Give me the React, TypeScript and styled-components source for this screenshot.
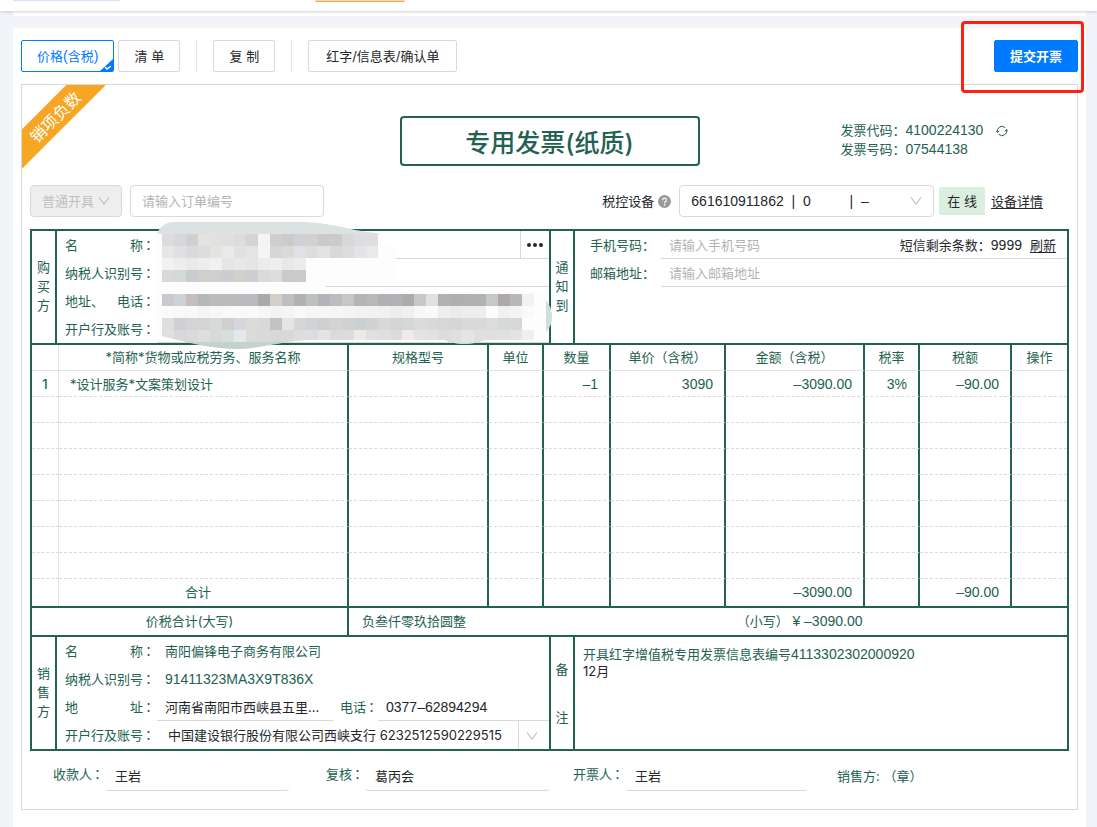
import React from "react";
import styled, { createGlobalStyle, css } from "styled-components";

const c = {
  green: "#236152",
  ink: "#24272b",
  line: "#d9d9d9",
  mute: "#b3b3b3",
  blue: "#007bff",
  page: "#f3f4f9",
};
const sans = `Inter, "Noto Sans CJK SC", sans-serif`;
const digits = css`
  font-family: "Liberation Sans", "Noto Sans CJK SC", sans-serif;
  font-size: 14px;
`;

const Global = createGlobalStyle`
  * { box-sizing: border-box; }
  body { margin: 0; background: ${c.page}; }
  body, button, input, select, textarea {
    font-family: ${sans};
    font-size: 13px;
    line-height: 19px;
    color: ${c.ink};
  }
  input::placeholder { color: ${c.mute}; opacity: 1; }
  p { margin: 0; }
`;

const Num = styled.span`
  ${digits}
`;

const Page = styled.div`
  display: flex;
  flex-direction: column;
  min-height: 100vh;
`;
const TopBar = styled.header`
  position: relative;
  display: flex;
  align-items: flex-start;
  height: 11px;
  padding-left: 13px;
  gap: 195px;
  background: #fff;
  box-shadow: 0 1px 3px rgba(0, 0, 0, 0.18);
`;
const TabEdge = styled.span`
  width: 107px;
  height: 1px;
  background: #cfe3fc;
`;
const OrangeEdge = styled.span`
  width: 90px;
  height: 2px;
  border-bottom: 1px solid #e9a857;
  border-radius: 0 0 3px 3px;
  background: #fbd9ae;
`;
const Strip = styled.div`
  height: 5px;
  margin: 0 11px 0 13px;
  background: #fff;
`;
const Card = styled.main`
  flex: 1;
  margin: 12px 11px 0 13px;
  padding: 12px 8px 17px;
  background: #fff;
`;

const Toolbar = styled.div`
  display: flex;
  align-items: center;
  margin-bottom: 12px;
`;
const Button = styled.button<{ $active?: boolean; $primary?: boolean; $min?: number }>`
  position: relative;
  height: 32px;
  min-width: ${(p) => p.$min || 62}px;
  padding: 0 15px;
  border: 1px solid ${c.line};
  border-radius: 2px;
  background: #fff;
  white-space: pre;
  & + & { margin-left: 4px; }
  ${(p) => p.$active && css`border-color: ${c.blue}; color: ${c.blue};`}
  ${(p) => p.$primary && css`
    border-color: ${c.blue};
    background: ${c.blue};
    color: #fff;
    font-weight: 700;
  `}
`;
const Corner = styled.svg`
  position: absolute;
  right: 0;
  bottom: 0;
`;
const Divider = styled.span`
  width: 1px;
  height: 32px;
  margin: 0 16px;
  background: #e3e3e3;
`;
const SubmitWrap = styled.div`
  position: relative;
  margin-left: auto;
`;
const Highlight = styled.span`
  position: absolute;
  inset: -19px -6px -21px -33px;
  border: 3px solid #fe2012;
  border-radius: 4px;
  pointer-events: none;
  z-index: 2;
`;

const Paper = styled.section`
  position: relative;
  padding: 31px 8px 0;
  border: 1px solid ${c.line};
  color: ${c.green};
`;
const RibbonBox = styled.div`
  position: absolute;
  top: 0;
  left: 0;
  width: 90px;
  height: 90px;
  overflow: hidden;
`;
const Ribbon = styled.div`
  position: absolute;
  left: -38px;
  top: 18px;
  width: 140px;
  height: 28px;
  padding-left: 2px;
  background: #f6a623;
  color: #fff;
  font-size: 16px;
  line-height: 30px;
  text-align: center;
  transform: rotate(-45deg);
`;
const Head = styled.div`
  display: grid;
  grid-template-columns: 1fr 300px 1fr;
  margin-bottom: 19px;
`;
const Title = styled.h1`
  grid-column: 2;
  margin: 0;
  height: 50px;
  padding-top: 2px;
  border: 2px solid ${c.green};
  border-radius: 4px;
  font-size: 25px;
  font-weight: 500;
  line-height: 46px;
  text-align: center;
`;
const Codes = styled.div`
  padding: 5px 0 0 141px;
`;
const CodeLine = styled.p`
  display: flex;
  align-items: center;
`;
const IconButton = styled.button`
  display: flex;
  align-items: center;
  justify-content: center;
  flex: none;
  padding: 0;
  border: 0;
  background: none;
`;
const Refresh = styled(IconButton)`
  margin-left: 13px;
  color: ${c.green};
`;

const Filters = styled.div`
  display: flex;
  align-items: center;
  margin-bottom: 12px;
  color: ${c.ink};
`;
const SelectWrap = styled.span<{ $w: number; $off?: boolean }>`
  position: relative;
  display: block;
  width: ${(p) => p.$w}px;
  height: 32px;
  border: 1px solid ${c.line};
  border-radius: 4px;
  background: ${(p) => (p.$off ? "#eeeeee" : "#fff")};
`;
const Select = styled.select<{ $num?: boolean }>`
  appearance: none;
  width: 100%;
  height: 100%;
  padding: 0 11px;
  border: 0;
  background: none;
  opacity: 1;
  ${(p) => p.$num && digits}
  &:disabled { color: #bfbfbf; }
`;
const Chevron = styled.svg`
  position: absolute;
  right: 11px;
  top: 9px;
  pointer-events: none;
`;
const OrderInput = styled.input`
  width: 194px;
  height: 32px;
  margin-left: 8px;
  padding: 0 11px;
  border: 1px solid ${c.line};
  border-radius: 4px;
`;
const DeviceLabel = styled.label`
  margin-left: auto;
`;
const Help = styled.svg`
  margin: 0 8px 0 4px;
`;
const Status = styled.span`
  height: 28px;
  margin: 0 6px 0 5px;
  padding: 0 8px;
  border-radius: 2px;
  background: #dbefdf;
  line-height: 28px;
  white-space: pre;
`;
const Link = styled.a`
  color: ${c.ink};
  text-decoration: underline;
  text-underline-offset: 2px;
`;
const DeviceLink = styled(Link)`
  margin-right: 26px;
`;

const Form = styled.div`
  border: 2px solid ${c.green};
  width: 100%;
`;
const PartyGrid = styled.div`
  display: grid;
  grid-template-columns: 25px minmax(0, 1fr) 26px minmax(0, 1fr);
  min-height: 112px;
`;
const Side = styled.div<{ $mid?: boolean; $gap?: number }>`
  display: flex;
  flex-direction: column;
  align-items: center;
  justify-content: center;
  gap: ${(p) => p.$gap || 0}px;
  padding-bottom: ${(p) => (p.$gap ? 0 : 2)}px;
  border-right: 2px solid ${c.green};
  border-left: ${(p) => (p.$mid ? `2px solid ${c.green}` : "0")};
`;
const Panel = styled.div`
  position: relative;
`;
const Row = styled.div`
  display: flex;
  align-items: stretch;
  height: 28px;
  line-height: 28px;
`;
const JLabel = styled.label`
  display: flex;
  flex: none;
  width: 100px;
  padding-left: 8px;
`;
const Spread = styled.span`
  display: flex;
  justify-content: space-between;
  width: 78px;
`;
const ColonMark = styled.span`
  margin: 0 1px 0 -1px;
  font-family: "Noto Sans CJK TC", sans-serif;
`;
const Cell = styled.div<{ $line?: boolean; $w?: number }>`
  display: flex;
  align-items: center;
  min-width: 0;
  flex: ${(p) => (p.$w ? `0 0 ${p.$w}px` : "1")};
  border-bottom: 1px solid ${(p) => (p.$line ? c.line : "transparent")};
`;
const Bare = styled.input<{ $num?: boolean }>`
  flex: 1;
  width: 100%;
  min-width: 0;
  height: 26px;
  padding: 0 8px;
  border: 0;
  background: none;
  text-overflow: ellipsis;
  ${(p) => p.$num && digits}
`;
const Value = styled.span`
  padding-left: 8px;
`;
const BankArrow = styled.div`
  flex: none;
  display: flex;
  align-items: center;
  justify-content: center;
  width: 31px;
  height: 28px;
  padding: 2px 4px 0 0;
  border-left: 1px solid ${c.line};
  pointer-events: none;
`;
const More = styled(IconButton)`
  width: 29px;
  border-left: 1px solid ${c.line};
  border-bottom: 1px solid ${c.line};
`;
const PhoneLabel = styled.label`
  flex: none;
  width: 39px;
  margin: 0 -1px 0 7px;
  white-space: nowrap;
`;
const NoticeLabel = styled.label`
  flex: none;
  width: 86px;
  padding-left: 15px;
`;
const Sms = styled.span`
  flex: none;
  margin-right: 8px;
  color: ${c.ink};
`;
const SmsLink = styled(Link)`
  flex: none;
  margin-right: 11px;
`;
const BankSelect = styled.select`
  appearance: none;
  flex: 1;
  min-width: 0;
  padding: 0 0 0 11px;
  border: 0;
  background: none;
`;
const Mosaic = styled.svg`
  position: absolute;
  left: 93px;
  top: -13px;
  z-index: 1;
  pointer-events: none;
`;

const Items = styled.table`
  width: 100%;
  table-layout: fixed;
  border-collapse: separate;
  border-spacing: 0;
  border-top: 2px solid ${c.green};
  border-bottom: 2px solid ${c.green};
  th, td {
    height: 26px;
    padding: 0 11px;
    border-right: 2px solid ${c.green};
    border-bottom: 1px dashed ${c.line};
    font-weight: 400;
    line-height: 25px;
    text-align: right;
    white-space: nowrap;
  }
  th {
    padding: 0;
    border-bottom: 1px solid #e3e3e3;
    text-align: center;
  }
  tbody td { padding-top: 2px; line-height: 23px; }
  td:nth-child(n + 3) { ${digits} }
  th:first-child, td:first-child {
    padding-left: 0;
    padding-right: 0;
    border-right: 1px solid #e3e3e3;
    text-align: center;
    font-weight: 500;
  }
  td:nth-child(2) { text-align: left; }
  th:last-child, td:last-child { border-right: 0; }
  tfoot td { height: 27px; border-bottom: 0; }
  tfoot td:nth-child(2) { padding-right: 21px; text-align: center; }
`;
const SumRow = styled.div`
  display: flex;
  height: 29px;
  line-height: 27px;
  border-bottom: 2px solid ${c.green};
`;
const SumLabel = styled.div`
  flex: 0 1 317px;
  border-right: 2px solid ${c.green};
  text-align: center;
`;
const SumValue = styled.div`
  flex: 1;
  display: grid;
  grid-template-columns: 54% 46%;
`;
const SumWords = styled.span`
  padding-left: 13px;
`;
const Remarks = styled.div`
  display: flex;
  flex-direction: column;
  padding: 9px 8px 0;
  line-height: 17px;
`;
const RemarkArea = styled.textarea`
  flex: 1;
  padding: 0;
  border: 0;
  background: none;
  line-height: 17px;
  resize: none;
`;

const Footer = styled.footer`
  display: flex;
  height: 58px;
  padding: 13px 0 0 23px;
`;
const Signer = styled.div<{ $share: number; $before: number }>`
  display: flex;
  flex: ${(p) => p.$share} 1 0;
  min-width: 0;
  margin-left: ${(p) => p.$before}px;
`;
const SignLabel = styled.label`
  flex: none;
`;
const SignInput = styled.input`
  flex: 1;
  width: 100%;
  min-width: 0;
  height: 27px;
  padding: 0 9px 4px;
  border: 1px solid transparent;
  border-bottom-color: ${c.line};
  border-radius: 4px;
  background: none;
`;
const Stamp = styled.div`
  flex: 0 0 232px;
  margin-left: 29px;
  padding-top: 3px;
`;

const chevronPath = <path d="M1 2.5 6 9l5-6.5" fill="none" stroke="#bdbdbd" strokeWidth="1.1" />;

const Label = ({ parts, id }: { parts: string[]; id?: string }) => (
  <JLabel htmlFor={id}>
    <Spread>{parts.map((t) => <span key={t}>{t}</span>)}</Spread>
    <ColonMark>：</ColonMark>
  </JLabel>
);

/* Rows of 12px colour blocks that hide the buyer's details */
const blocks: [number, string][] = [
  [16, "dcdce0 d5d7dc d0d0d1 e5e3e0 e2e1df dfdfe1 dfdbd8 d3d4d3 f4f4f4 cfcdce cbcbcb cfd1d6 d3d1d0 cbcaca cccbcb dad8d7 dcdde1 e0dedd"],
  [28, "e6e6e6 e0e0e2 d9dadc dedddd e6e4df e9eae9 dfe2e5 e4e4e4 f5f5f5 d6d6d6 dadada dfe1e4 dedddc e5e3df dad8d8 dddddd e4e4e6 e9e9e9"],
  [40, "f2f2f2 eceeec e9eae8 edeeec f0f1f0 e6e6e6 e7e8e8 e4e5e6 eaebed efeeec e7e8e8 ececea"],
  [52, "d9d9d8 d3d8d8 cbcccf d2cecb cecfd1 cccdcf d3d0cc cdced0 d9dbda dddddb cacace cbcbca"],
  [76, "cbc9cd cdd2d6 c5bdbe b5b8b5 bbbbbb bbbbbb bababc b9b9be a9a8ab d5cfcc bdbfc0 b1b1b2 bcc0be b3b4ba bdbbbf c6c7c6 b2b5b3 bab9ba b2b0b6 b2b1b4 adabae c8c8c9 dfe2e1 b1b0b2 afb0ad afb0b0 b0b1b4 c4c9c7 ada9aa bbb6b9 f2f2f2"],
  [88, "fafafa f8f8f8 f9f9f9 f4f5f5 f7f7f7 f9f9f9 f9f9f9 f9f9f9 f6f6f6 f2f3f3 f5f5f4 f8f8f8 f6f6f6 f6f6f6 f5f5f5 f3f4f4 f2f2f1 f0f3f2 f1f1f1 ebedec f0f0f0 f6f7f6 f9f9f9 eeeeee eaebea ededed eeeeee fcfcfc f1f1f1 f4f4f4 fafafa"],
  [100, "dedede cecfd2 d4d4d5 d5d4d3 d8dad9 cfcfcf d5d7db dcdbd8 d9d9d9 c4c3c4 e5e5e5 d4d6d8 d1d2d5 cfcfd1 d5d3d3 d1d1d5 cbd0d2 d3d2d1 d8d8d7 d2d4d6 d6d6d5 dadbdd d9d9d9 d7d7d7 d6d6d6 d9d9d8 d9d9d9 dcdddb d5d9d8 d8d8d8"],
  [112, "e0e0e0 d8d8da dbd9d9 dededd d6dbd9 d8dedb e3e8ed d9dcd9 dadada d8d8d8 d9d9d9 dddddd dcdddd e2e4e6 dadadb dddcdc ebebea e0e0e1 dfdfdf dbdcde f0ebe8 e3e3e5 dfe2e1 dcdcdc e0dede e6e4e4 dfdfdf dee0df dde1e0 e5e3e2 f0f0f0"],
];

const BuyerMosaic = () => (
  <Mosaic width="410" height="136" viewBox="0 0 410 136" aria-hidden>
    <defs>
      <clipPath id="smear">
        <path d="M12 0H400V122H335C325 127 303 127 295 122H156C130 124 112 130 90 131C60 131 35 124 12 118Z" />
      </clipPath>
    </defs>
    <path d="M7 16C9 10 14 5 22 4H155C175 5 188 8 205 12L232 16Z" fill="#dae3e1" />
    <path d="M6 16H232V28H247L244 51V64H175V74H398V114C392 122 370 124 340 124H160L10 124C5 105 3 88 6 78Z" fill="#fdfdfd" />
    <g clipPath="url(#smear)">
      {blocks.map(([y, row]) =>
        row.split(" ").map((fill, i) => (
          <rect key={`${y}-${i}`} x={12 + i * 12} y={y} width="12" height="12" fill={`#${fill}`} />
        ))
      )}
      <path d="M12 124H400V136H12Z" fill="#c2d2cd" />
      <path d="M285 124H345V136H285Z" fill="#dde3e1" />
    </g>
    <path d="M396 82C404 92 404 106 396 114Z" fill="#d2deda" />
  </Mosaic>
);

const widths = [27, 0, 140, 55, 67, 115, 139, 55, 92, 55];
const headers = ["", "*简称*货物或应税劳务、服务名称", "规格型号", "单位", "数量", "单价（含税）", "金额（含税）", "税率", "税额", "操作"];
const lines = [
  ["1", "*设计服务*文案策划设计", "", "", "–1", "3090", "–3090.00", "3%", "–90.00", ""],
  ...Array.from({ length: 7 }, () => Array(10).fill("")),
];
const totals = ["", "合计", "", "", "", "", "–3090.00", "", "–90.00", ""];

const signers = [
  { id: "payee", label: "收款人", value: "王岩", share: 237, before: 0 },
  { id: "review", label: "复核", value: "葛丙会", share: 224, before: 36 },
  { id: "drawer", label: "开票人", value: "王岩", share: 235, before: 23 },
];

const gap = (n: number) => "\u00a0".repeat(n);

export default function App() {
  return (
    <Page>
      <Global />
      <TopBar>
        <TabEdge />
        <OrangeEdge />
      </TopBar>
      <Strip />
      <Card>
        <Toolbar>
          <Button $active>
            价格<Num>(</Num>含税<Num>)</Num>
            <Corner width="13" height="12" viewBox="0 0 13 12" aria-hidden>
              <path d="M13 0V12H0Z" fill={c.blue} />
              <path d="M5 8l2 2 4-3" fill="none" stroke="#fff" strokeWidth="1.4" />
            </Corner>
          </Button>
          <Button>清 单</Button>
          <Divider />
          <Button>复 制</Button>
          <Divider />
          <Button $min={149}>红字/信息表/确认单</Button>
          <SubmitWrap>
            <Button $primary>提交开票</Button>
            <Highlight />
          </SubmitWrap>
        </Toolbar>

        <Paper>
          <RibbonBox>
            <Ribbon>销项负数</Ribbon>
          </RibbonBox>
          <Head>
            <Title>专用发票(纸质)</Title>
            <Codes>
              <CodeLine>
                发票代码：<Num>4100224130</Num>
                <Refresh aria-label="刷新发票代码">
                  <svg width="12" height="12" viewBox="0 0 12 12" fill="none" stroke="currentColor">
                    <path d="M1.6 7.2A4.5 4.5 0 0 1 9.2 2.8M10.4 4.8A4.5 4.5 0 0 1 2.8 9.2" />
                    <path d="M0 5.6 1.5 7.4 3.2 5.8M8.8 6.2l1.7-1.6L12 6.4" strokeWidth="0.9" />
                  </svg>
                </Refresh>
              </CodeLine>
              <CodeLine>发票号码：<Num>07544138</Num></CodeLine>
            </Codes>
          </Head>

          <Filters>
            <SelectWrap $w={92} $off>
              <Select disabled aria-label="开具方式">
                <option>普通开具</option>
              </Select>
              <Chevron width="12" height="12" viewBox="0 0 12 12" aria-hidden>{chevronPath}</Chevron>
            </SelectWrap>
            <OrderInput placeholder="请输入订单编号" aria-label="订单编号" />
            <DeviceLabel htmlFor="device">税控设备</DeviceLabel>
            <Help width="13" height="13" viewBox="0 0 13 13" aria-hidden>
              <circle cx="6.5" cy="6.5" r="6.5" fill="#999" />
              <path d="M4.5 5.2a2 2 0 1 1 3 1.6c-.7.4-1 .7-1 1.4" fill="none" stroke="#fff" strokeWidth="1.2" />
              <circle cx="6.5" cy="9.9" r="0.8" fill="#fff" />
            </Help>
            <SelectWrap $w={255}>
              <Select id="device" $num>
                <option>{`661610911862${gap(2)}|${gap(2)}0${gap(10)}|${gap(2)}–`}</option>
              </Select>
              <Chevron width="12" height="12" viewBox="0 0 12 12" aria-hidden>{chevronPath}</Chevron>
            </SelectWrap>
            <Status>在 线</Status>
            <DeviceLink href="#device">设备详情</DeviceLink>
          </Filters>

          <Form>
            <PartyGrid>
              <Side><span>购</span><span>买</span><span>方</span></Side>
              <Panel>
                <Row>
                  <Label parts={["名", "称"]} id="buyer-name" />
                  <Cell $line><Bare id="buyer-name" /></Cell>
                  <More aria-label="更多">
                    <svg width="16" height="4" viewBox="0 0 16 4" fill={c.ink}>
                      <circle cx="2" cy="2" r="2" /><circle cx="8" cy="2" r="2" /><circle cx="14" cy="2" r="2" />
                    </svg>
                  </More>
                </Row>
                <Row>
                  <Label parts={["纳税人识别号"]} id="buyer-tax" />
                  <Cell $line><Bare id="buyer-tax" /></Cell>
                </Row>
                <Row>
                  <Label parts={["地址、", "电话"]} id="buyer-addr" />
                  <Cell><Bare id="buyer-addr" /></Cell>
                </Row>
                <Row>
                  <Label parts={["开户行及账号"]} id="buyer-bank" />
                  <Cell $line><Bare id="buyer-bank" /></Cell>
                </Row>
                <BuyerMosaic />
              </Panel>
              <Side $mid><span>通</span><span>知</span><span>到</span></Side>
              <Panel>
                <Row>
                  <NoticeLabel htmlFor="mobile">手机号码：</NoticeLabel>
                  <Cell $line>
                    <Bare id="mobile" placeholder="请输入手机号码" />
                    <Sms>短信剩余条数：<Num>9999</Num></Sms>
                    <SmsLink href="#sms">刷新</SmsLink>
                  </Cell>
                </Row>
                <Row>
                  <NoticeLabel htmlFor="mail">邮箱地址：</NoticeLabel>
                  <Cell $line><Bare id="mail" placeholder="请输入邮箱地址" /></Cell>
                </Row>
              </Panel>
            </PartyGrid>

            <Items>
              <colgroup>
                {widths.map((w, i) => <col key={i} width={w || undefined} />)}
              </colgroup>
              <thead>
                <tr>{headers.map((h, i) => <th key={i}>{h}</th>)}</tr>
              </thead>
              <tbody>
                {lines.map((row, r) => (
                  <tr key={r}>{row.map((v, i) => <td key={i}>{v}</td>)}</tr>
                ))}
              </tbody>
              <tfoot>
                <tr>{totals.map((v, i) => <td key={i}>{v}</td>)}</tr>
              </tfoot>
            </Items>

            <SumRow>
              <SumLabel>价税合计(大写)</SumLabel>
              <SumValue>
                <SumWords>负叁仟零玖拾圆整</SumWords>
                <span>（小写） <Num>¥ –3090.00</Num></span>
              </SumValue>
            </SumRow>

            <PartyGrid>
              <Side><span>销</span><span>售</span><span>方</span></Side>
              <Panel>
                <Row>
                  <Label parts={["名", "称"]} />
                  <Value>南阳偏锋电子商务有限公司</Value>
                </Row>
                <Row>
                  <Label parts={["纳税人识别号"]} />
                  <Value><Num>91411323MA3X9T836X</Num></Value>
                </Row>
                <Row>
                  <Label parts={["地", "址"]} id="seller-addr" />
                  <Cell $line $w={176}><Bare id="seller-addr" defaultValue="河南省南阳市西峡县五里..." /></Cell>
                  <PhoneLabel htmlFor="seller-phone">电话<ColonMark>：</ColonMark></PhoneLabel>
                  <Cell $line><Bare id="seller-phone" $num defaultValue="0377–62894294" /></Cell>
                </Row>
                <Row>
                  <Label parts={["开户行及账号"]} id="seller-bank" />
                  <BankSelect id="seller-bank">
                    <option>中国建设银行股份有限公司西峡支行 6232512590229515</option>
                  </BankSelect>
                  <BankArrow>
                    <svg width="12" height="12" viewBox="0 0 12 12" aria-hidden>{chevronPath}</svg>
                  </BankArrow>
                </Row>
              </Panel>
              <Side $mid $gap={29}><span>备</span><span>注</span></Side>
              <Remarks>
                <p>开具红字增值税专用发票信息表编号<Num>4113302302000920</Num></p>
                <RemarkArea aria-label="备注" defaultValue="12月" />
              </Remarks>
            </PartyGrid>
          </Form>

          <Footer>
            {signers.map((s) => (
              <Signer key={s.id} $share={s.share} $before={s.before}>
                <SignLabel htmlFor={s.id}>{s.label}<ColonMark>：</ColonMark></SignLabel>
                <SignInput id={s.id} defaultValue={s.value} />
              </Signer>
            ))}
            <Stamp>销售方: （章）</Stamp>
          </Footer>
        </Paper>
      </Card>
    </Page>
  );
}
